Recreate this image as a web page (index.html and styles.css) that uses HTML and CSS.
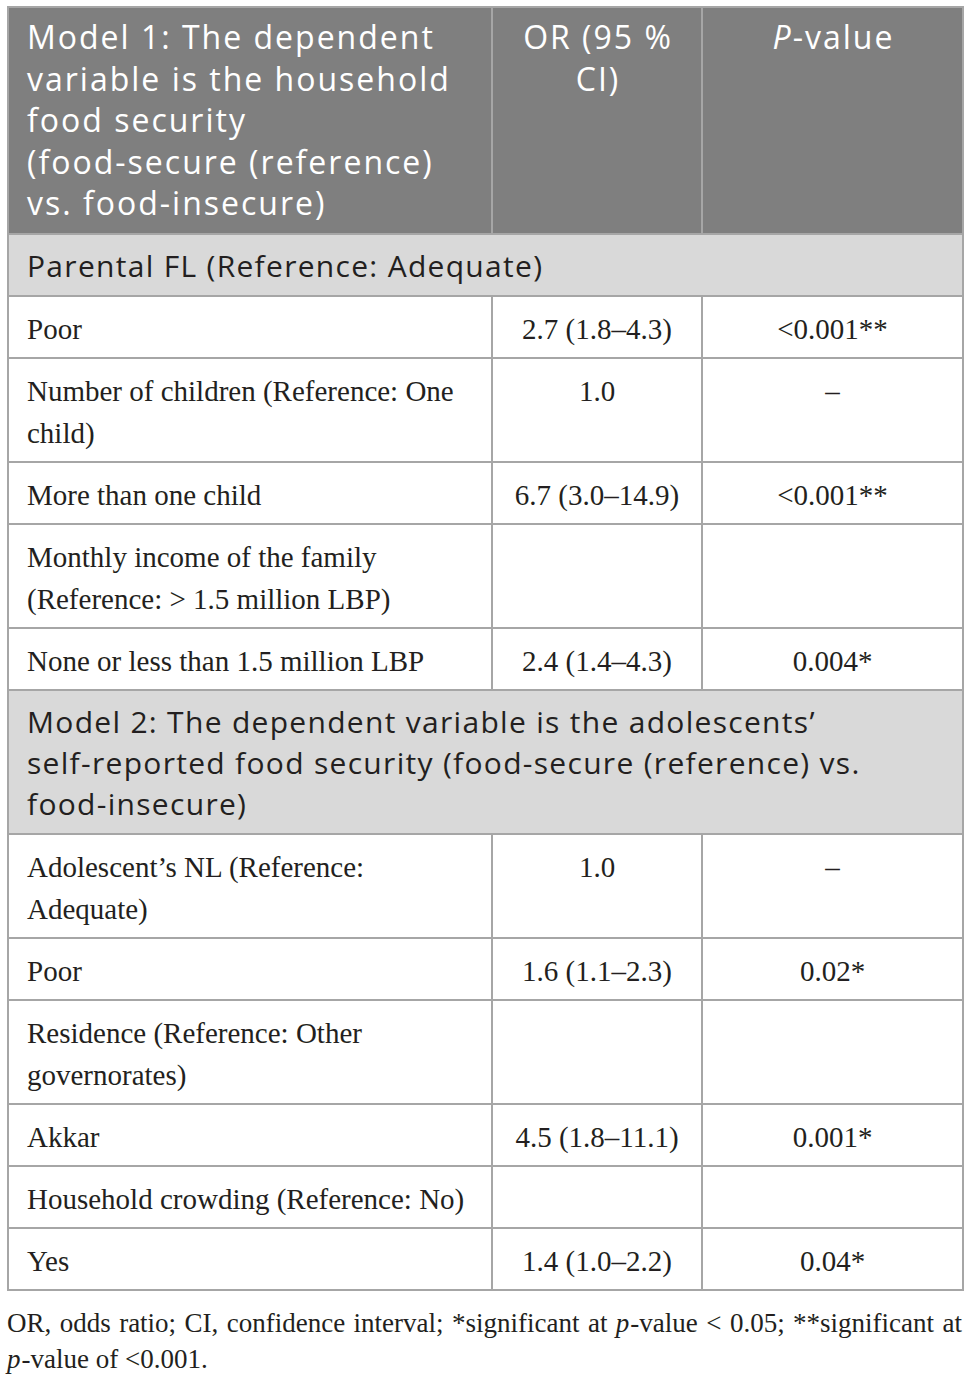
FILE: index.html
```html
<!DOCTYPE html>
<html>
<head>
<meta charset="utf-8">
<link rel="stylesheet" href="styles.css">
</head>
<body>
<table class="tbl">
  <colgroup>
    <col class="c1"><col class="c2"><col class="c3">
  </colgroup>
  <thead>
    <tr class="head">
      <th class="left">Model 1: The dependent variable is the household food security <span class="nw">(food-secure (reference)</span> vs. <span class="nw">food-insecure)</span></th>
      <th>OR (95 % CI)</th>
      <th><i>P</i>-value</th>
    </tr>
  </thead>
  <tbody>
    <tr class="section"><td colspan="3">Parental FL (Reference: Adequate)</td></tr>
    <tr><td class="left">Poor</td><td>2.7 (1.8–4.3)</td><td>&lt;0.001**</td></tr>
    <tr><td class="left">Number of children (Reference: One child)</td><td>1.0</td><td>–</td></tr>
    <tr><td class="left">More than one child</td><td>6.7 (3.0–14.9)</td><td>&lt;0.001**</td></tr>
    <tr><td class="left">Monthly income of the family (Reference: &gt; 1.5 million LBP)</td><td></td><td></td></tr>
    <tr><td class="left">None or less than 1.5 million LBP</td><td>2.4 (1.4–4.3)</td><td>0.004*</td></tr>
    <tr class="section"><td colspan="3">Model 2: The dependent variable is the adolescents’ <span class="nw">self-reported</span> food security <span class="nw">(food-secure</span> (reference) vs. <span class="nw">food-insecure)</span></td></tr>
    <tr><td class="left">Adolescent’s NL (Reference: Adequate)</td><td>1.0</td><td>–</td></tr>
    <tr><td class="left">Poor</td><td>1.6 (1.1–2.3)</td><td>0.02*</td></tr>
    <tr><td class="left">Residence (Reference: Other governorates)</td><td></td><td></td></tr>
    <tr><td class="left">Akkar</td><td>4.5 (1.8–11.1)</td><td>0.001*</td></tr>
    <tr><td class="left">Household crowding (Reference: No)</td><td></td><td></td></tr>
    <tr><td class="left">Yes</td><td>1.4 (1.0–2.2)</td><td>0.04*</td></tr>
  </tbody>
</table>
<p class="note">OR, odds ratio; CI, confidence interval; *significant at <i>p</i>-value &lt; 0.05; **significant at <span class="nw"><i>p</i>-value of &lt;0.001.</span></p>
</body>
</html>
```

FILE: styles.css
```css
html, body {
  margin: 0;
  padding: 0;
  background: #ffffff;
}
body {
  padding: 6px 7px 0 7px;
}
.tbl {
  width: 955px;
  border-collapse: collapse;
  table-layout: fixed;
  font-family: "Liberation Serif", "Times New Roman", serif;
  color: #231f20;
}
.c1 { width: 484px; }
.c2 { width: 210px; }
.c3 { width: 261px; }
.tbl th, .tbl td {
  border: 2px solid #a6a6a6;
  vertical-align: top;
  text-align: center;
}
.nw { white-space: nowrap; }
.head th {
  background: #7f7f7f;
  color: #ffffff;
  font-family: "Open Sans", "Liberation Sans", sans-serif;
  font-weight: normal;
  font-size: 32px;
  letter-spacing: 2px;
  line-height: 41.5px;
  padding: 8px 16px 9px 18px;
}
.head th.left { text-align: left; }
.head th i { font-style: italic; }
.section td {
  background: #d9d9d9;
  font-family: "Open Sans", "Liberation Sans", sans-serif;
  font-size: 30px;
  letter-spacing: 1.3px;
  line-height: 41px;
  padding: 10px 18px 9px 18px;
  text-align: left;
  color: #231f20;
}
.tbl tbody tr:not(.section) td {
  font-size: 29px;
  line-height: 42px;
  padding: 11px 18px 7px 18px;
}
.tbl tbody td.left { text-align: left; }
.note {
  margin: 14px 0 0 0;
  width: 955px;
  font-family: "Liberation Serif", "Times New Roman", serif;
  font-size: 27px;
  line-height: 36px;
  color: #231f20;
  text-align: justify;
}
.note i { padding-right: 1px; }
```
